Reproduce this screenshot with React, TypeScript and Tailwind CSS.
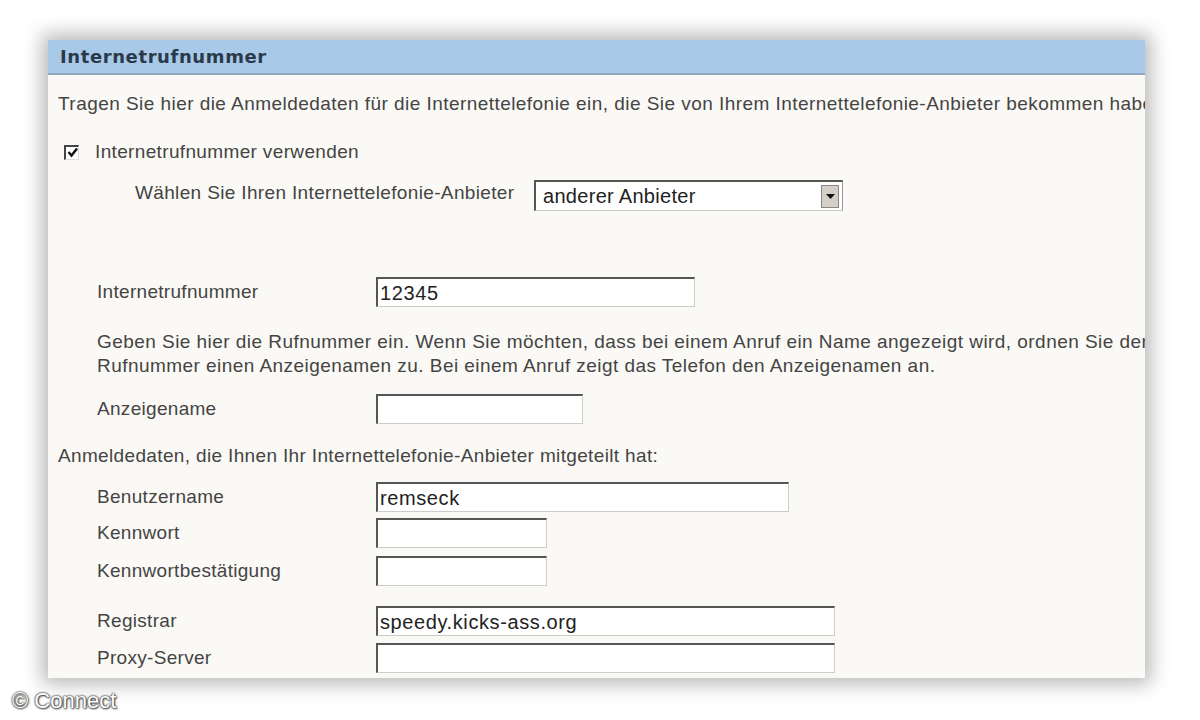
import React from "react";

const inputCls =
  "h-[30px] bg-white border-t-2 border-l-2 border-r border-b border-t-[#555] border-l-[#555] border-r-[#ccc] border-b-[#ccc] px-[2px] text-[20px] tracking-[0.6px] leading-[26px] text-[#222] flex items-center";

function Field({ label, w, value, mt }: { label: string; w: string; value?: string; mt: string }) {
  return (
    <div className={`flex items-center ${mt}`}>
      <div className="w-[328px] pl-[49px] text-[19px] tracking-[0.3px] text-[#444]">{label}</div>
      <div className={`${inputCls} ${w}`}>{value}</div>
    </div>
  );
}

export default function App() {
  return (
    <div className="w-[1200px] h-[720px] bg-white relative overflow-hidden" style={{ fontFamily: '"Liberation Sans", Arial, sans-serif' }}>
      <div className="absolute left-[48px] top-[40px] w-[1097px] h-[638px] bg-[#fbf9f5] overflow-hidden shadow-[0_0_18px_6px_rgba(0,0,0,0.28)]">
        <div className="h-[35px] bg-[#a8c9e8] border-b-2 border-[#8ea8bf] flex items-center pl-[12px]">
          <span className="text-[18px] font-bold text-[#2b3a4a] tracking-[0.6px]" style={{ fontFamily: '"DejaVu Sans", Verdana, sans-serif' }}>
            Internetrufnummer
          </span>
        </div>
        <div className="mt-[19px] pl-[10px] text-[19px] tracking-[0.45px] leading-[20px] text-[#444] whitespace-nowrap">
          Tragen Sie hier die Anmeldedaten für die Internettelefonie ein, die Sie von Ihrem Internettelefonie-Anbieter bekommen haben.
        </div>
        <div className="mt-[28px] flex items-center pl-[16px] h-[20px]">
          <div className="w-[15px] h-[15px] border-t-2 border-l-2 border-r border-b border-t-[#444] border-l-[#444] border-r-[#ddd] border-b-[#ddd] bg-white flex items-center justify-center">
            <svg width="11" height="11" viewBox="0 0 11 11">
              <path d="M1.5 5 L4.5 8.5 L10 1.5" stroke="#111" strokeWidth="2.4" fill="none" />
            </svg>
          </div>
          <span className="ml-[16px] text-[19px] tracking-[0.35px] text-[#444]">Internetrufnummer verwenden</span>
        </div>
        <div className="mt-[18px] flex items-start">
          <div className="pl-[87px] w-[486px] text-[19px] tracking-[0.35px] text-[#444] leading-[26px] whitespace-nowrap">Wählen Sie Ihren Internettelefonie-Anbieter</div>
          <div className="w-[309px] h-[31px] bg-white border-t-2 border-l-2 border-r border-b border-t-[#555] border-l-[#555] border-r-[#999] border-b-[#ccc] flex items-center">
            <span className="flex-1 pl-[7px] text-[20px] tracking-[0.3px] text-[#222]">anderer Anbieter</span>
            <div className="w-[18px] h-[23px] mr-[3px] bg-[#d4d0c8] border border-[#888] flex items-center justify-center">
              <svg width="9" height="5" viewBox="0 0 9 5"><path d="M0 0 H9 L4.5 5 Z" fill="#111" /></svg>
            </div>
          </div>
        </div>
        <Field label="Internetrufnummer" w="w-[319px]" value="12345" mt="mt-[66px]" />
        <div className="mt-[23px] pl-[49px] text-[19px] tracking-[0.45px] leading-[24px] text-[#444] whitespace-nowrap">
          <div>Geben Sie hier die Rufnummer ein. Wenn Sie möchten, dass bei einem Anruf ein Name angezeigt wird, ordnen Sie der</div>
          <div>Rufnummer einen Anzeigenamen zu. Bei einem Anruf zeigt das Telefon den Anzeigenamen an.</div>
        </div>
        <Field label="Anzeigename" w="w-[207px]" mt="mt-[16px]" />
        <div className="mt-[22px] pl-[10px] text-[19px] tracking-[0.35px] leading-[20px] text-[#444] whitespace-nowrap">
          Anmeldedaten, die Ihnen Ihr Internettelefonie-Anbieter mitgeteilt hat:
        </div>
        <Field label="Benutzername" w="w-[413px]" value="remseck" mt="mt-[16px]" />
        <Field label="Kennwort" w="w-[171px]" mt="mt-[6px]" />
        <Field label="Kennwortbestätigung" w="w-[171px]" mt="mt-[8px]" />
        <Field label="Registrar" w="w-[459px]" value="speedy.kicks-ass.org" mt="mt-[20px]" />
        <Field label="Proxy-Server" w="w-[459px]" mt="mt-[7px]" />
      </div>
      <div
        className="absolute left-[12px] top-[684px] text-[22px] text-white"
        style={{ textShadow: "0 0 2px #333, 0 0 2px #333, 1px 1px 2px #555" }}
      >
        © Connect
      </div>
    </div>
  );
}
